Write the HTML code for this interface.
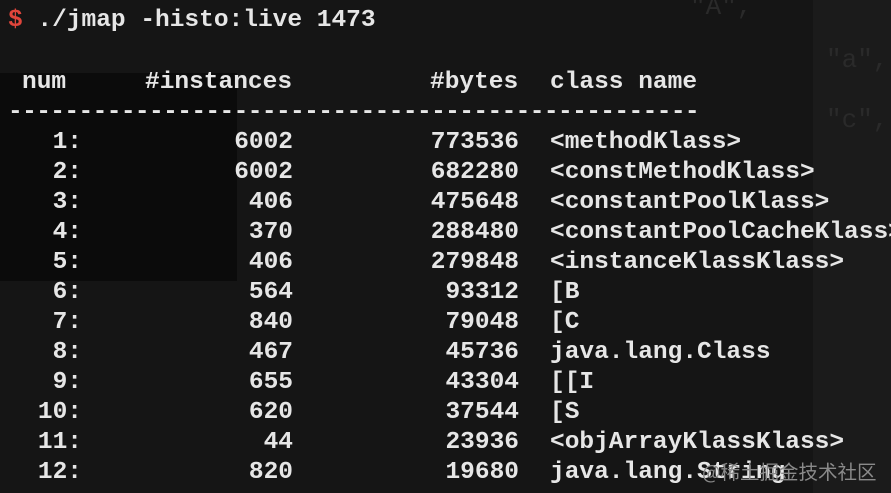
<!DOCTYPE html>
<html><head><style>
html,body{margin:0;padding:0}
body{width:891px;height:493px;overflow:hidden;background:#151515;position:relative;font-family:"Liberation Mono",monospace;font-weight:bold;font-size:24.5px;color:#e6e6e6}
.t{position:absolute;white-space:pre;line-height:30px}
.r{text-align:right}
.g{color:#2a2a2a;font-weight:normal}
</style></head><body>
<div style="position:absolute;left:0;top:73px;width:237px;height:208px;background:#0b0b0b"></div>
<div style="position:absolute;left:813px;top:0;width:78px;height:493px;background:#1b1b1b"></div>
<div class="t g" style="left:690px;top:-8px;font-size:26px">"A",</div>
<div class="t g" style="left:826px;top:45px;font-size:26px">"a",</div>
<div class="t g" style="left:826px;top:105px;font-size:26px">"c",</div>
<div class="t" style="left:8px;top:6px"><span style="color:#e0453b">$</span> ./jmap -histo:live 1473</div>
<div class="t" style="left:22px;top:68px">num</div>
<div class="t" style="left:145px;top:68px">#instances</div>
<div class="t" style="left:430px;top:68px">#bytes</div>
<div class="t" style="left:550px;top:68px">class name</div>
<div class="t" style="left:8px;top:98px;letter-spacing:-0.6px">-------------------------------------------------</div>
<div id="rows"></div>
<div class="t g" style="left:702px;top:456px;font-family:'Noto Sans CJK SC',sans-serif;font-size:19.5px;color:#8a8a8a;font-weight:normal">@稀土掘金技术社区</div>
<script>
var d=[["1:",6002,773536,"<methodKlass>"],["2:",6002,682280,"<constMethodKlass>"],["3:",406,475648,"<constantPoolKlass>"],["4:",370,288480,"<constantPoolCacheKlass>"],["5:",406,279848,"<instanceKlassKlass>"],["6:",564,93312,"[B"],["7:",840,79048,"[C"],["8:",467,45736,"java.lang.Class"],["9:",655,43304,"[[I"],["10:",620,37544,"[S"],["11:",44,23936,"<objArrayKlassKlass>"],["12:",820,19680,"java.lang.String"]];
var h="";d.forEach(function(r,i){var y=128+i*30;
function e(s){return String(s).replace(/</g,"&lt;").replace(/>/g,"&gt;")}
h+='<div class="t r" style="right:809px;top:'+y+'px">'+r[0]+'</div>';
h+='<div class="t r" style="right:598px;top:'+y+'px">'+r[1]+'</div>';
h+='<div class="t r" style="right:372px;top:'+y+'px">'+r[2]+'</div>';
h+='<div class="t" style="left:550px;top:'+y+'px">'+e(r[3])+'</div>';});
document.getElementById("rows").innerHTML=h;
</script>
</body></html>
